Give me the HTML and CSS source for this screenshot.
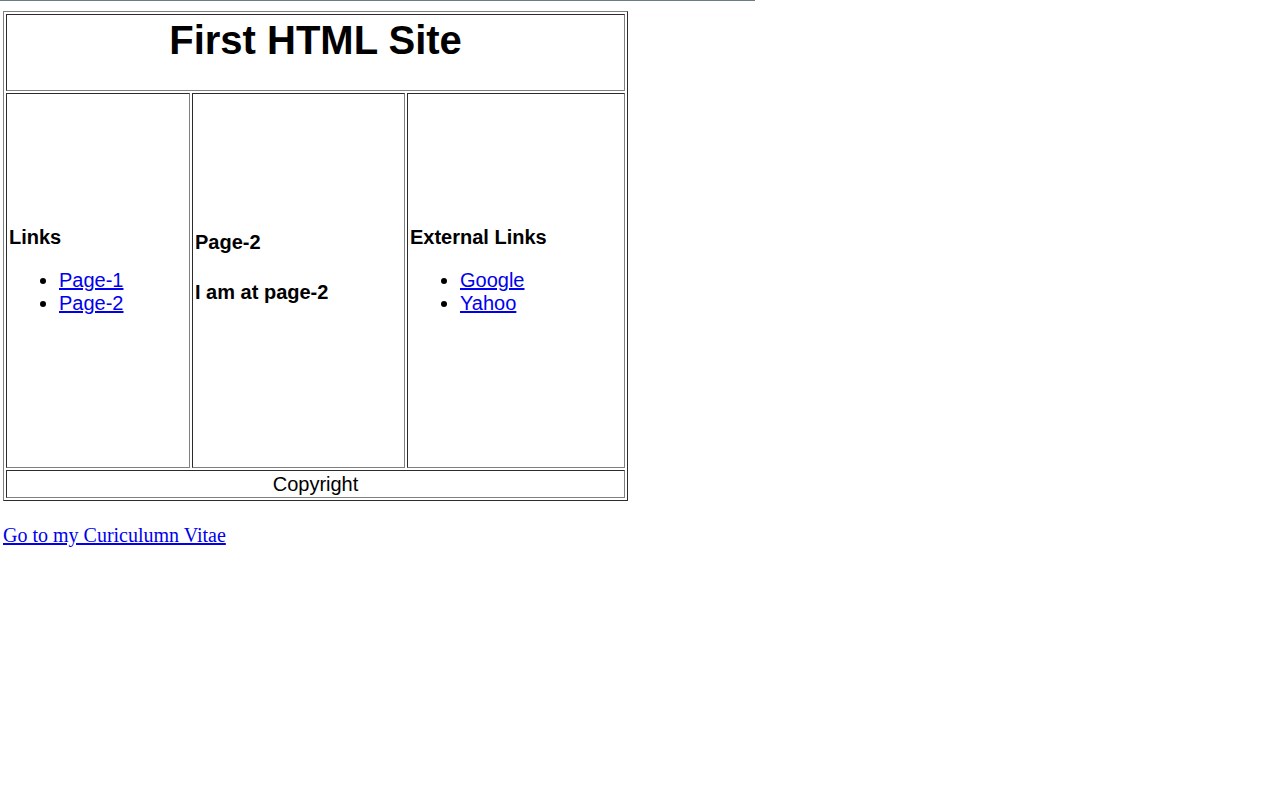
FILE: index.html
```html
<!DOCTYPE html>
<html>
<head>
<meta charset="utf-8">
<title>First HTML Site</title>
<link rel="stylesheet" href="styles.css">
</head>
<body>
<div class="topline"></div>
<div class="page">
  <table class="site">
    <colgroup>
      <col class="col-left">
      <col class="col-mid">
      <col class="col-right">
    </colgroup>
    <tr class="row-head">
      <td class="cell cell-head" colspan="3"><h1 class="title">First HTML Site</h1></td>
    </tr>
    <tr class="row-main">
      <td class="cell">
        <h4 class="side-title">Links</h4>
        <ul class="links">
          <li><a href="#">Page-1</a></li>
          <li><a href="#">Page-2</a></li>
        </ul>
      </td>
      <td class="cell">
        <h4 class="mid-title">Page-2</h4>
        <h4 class="mid-text">I am at page-2</h4>
      </td>
      <td class="cell">
        <h4 class="side-title">External Links</h4>
        <ul class="links">
          <li><a href="#">Google</a></li>
          <li><a href="#">Yahoo</a></li>
        </ul>
      </td>
    </tr>
    <tr class="row-foot">
      <td class="cell cell-foot" colspan="3">Copyright</td>
    </tr>
  </table>
  <p class="cv"><a href="#">Go to my Curiculumn Vitae</a></p>
</div>
</body>
</html>
```

FILE: styles.css
```css
html, body {
  margin: 0;
  padding: 0;
  background: #ffffff;
}

body {
  font-family: "Liberation Serif", "Times New Roman", serif;
  font-size: 20px;
  color: #000000;
}

.topline {
  width: 755px;
  height: 1px;
  background: #6a7d87;
}

.page {
  padding: 10px 3px 0;
}

.site {
  border: 1px outset grey;
  border-spacing: 2px;
  border-collapse: separate;
  table-layout: fixed;
  font-family: "Liberation Sans", Arial, sans-serif;
  font-size: 20px;
  width: 625px;
}

.col-left { width: 184px; }
.col-mid { width: 213px; }
.col-right { width: 218px; }

.cell {
  border: 1px inset grey;
  padding: 1px 1px 1px 2px;
  box-sizing: border-box;
  vertical-align: middle;
}

.row-head .cell { height: 77px; }
.row-main .cell { height: 375px; }
.row-foot .cell { height: 28px; }

.cell-head {
  text-align: center;
  vertical-align: top;
  padding-left: 1px;
}

.title {
  font-size: 40px;
  font-weight: bold;
  line-height: 46px;
  margin: 1px 0 0;
}

.side-title {
  font-size: 20px;
  font-weight: bold;
  line-height: 23px;
  margin: 0 0 20px;
}

.links {
  margin: 0 0 20px;
  padding-left: 50px;
  line-height: 23px;
}

.links a,
.cv a {
  color: #0000ee;
  text-decoration: underline;
}

.mid-title {
  font-size: 20px;
  font-weight: bold;
  line-height: 23px;
  margin: 0 0 27px;
}

.mid-text {
  font-size: 20px;
  font-weight: bold;
  line-height: 23px;
  margin: 0 0 26px;
}

.cell-foot {
  text-align: center;
  line-height: 23px;
  padding-left: 1px;
}

.cv {
  margin: 23px 0 0;
  line-height: 23px;
}
```
